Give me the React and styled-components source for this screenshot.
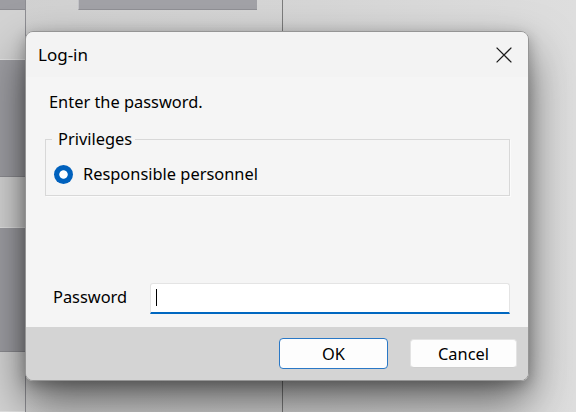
import React from "react";
import styled, { createGlobalStyle } from "styled-components";

const GlobalStyle = createGlobalStyle`
  html, body { margin: 0; padding: 0; }
  body {
    width: 576px;
    height: 412px;
    overflow: hidden;
    background: #d4d4d4;
    font-family: "Noto Sans", "Segoe UI", "Liberation Sans", sans-serif;
    color: #000;
  }
`;

/* ---------- background application (behind the modal) ---------- */

const Desktop = styled.div`
  position: relative;
  width: 576px;
  height: 412px;
  overflow: hidden;
  display: flex;
  background: linear-gradient(90deg, #d1d1d1 0%, #d6d6d6 55%, #dedede 100%);
`;

const Rail = styled.div`
  flex: none;
  width: 25px;
  display: flex;
  flex-direction: column;
  border-right: 1px solid #8e8e93;
`;

const RailBlock = styled.div`
  flex: ${(p) => (p.$fill ? "1" : `0 0 ${p.$h}px`)};
  box-sizing: border-box;
  background: ${(p) => (p.$dark ? "#9d9da2" : "#d3d3d3")};
  border-bottom: 1px solid ${(p) => (p.$dark ? "#8c8c91" : "#e2e2e2")};
`;

const TopArea = styled.div`
  flex: none;
  width: 231px;
  padding-left: 52px;
  box-sizing: border-box;
`;

const Tab = styled.div`
  width: 179px;
  height: 10px;
  box-sizing: border-box;
  background: #a2a2a7;
  border-left: 1px solid #c4c4c8;
  border-bottom: 1px solid #909095;
`;

const Gap = styled.div`
  flex: 0 0 25px;
`;

const Divider = styled.div`
  flex: 0 0 1px;
  background: #7c7c7c;
`;

const Rest = styled.div`
  flex: 1;
`;

/* ---------- modal dialog ---------- */

const Dialog = styled.div`
  position: absolute;
  left: 25px;
  top: 31px;
  width: 504px;
  height: 350px;
  box-sizing: border-box;
  display: flex;
  flex-direction: column;
  border: 1px solid #959595;
  border-radius: 8px;
  overflow: hidden;
  box-shadow: 0 22px 46px rgba(0, 0, 0, 0.55), 0 4px 14px rgba(0, 0, 0, 0.25);
`;

const TitleBar = styled.div`
  flex: 0 0 45px;
  display: flex;
  align-items: center;
  justify-content: space-between;
  padding-left: 12px;
  background: #f3f3f3;
`;

const Title = styled.span`
  font-size: 17px;
  color: #000;
`;

const CloseButton = styled.div`
  width: 49px;
  height: 45px;
  display: flex;
  align-items: center;
  justify-content: center;
`;

const Body = styled.div`
  flex: 1;
  display: flex;
  flex-direction: column;
  padding: 14px 18px 13px 19px;
  background: #f5f5f5;
  font-size: 16.4px;
  line-height: 22px;
`;

const Instruction = styled.div`
  padding-left: 4px;
`;

const GroupBox = styled.fieldset`
  margin: 15px 0 0 0;
  padding: 13px 8px 10px 8px;
  border: 1px solid #d8d8d8;
  box-shadow: 1px 1px 0 #fbfbfb;
  min-width: 0;
`;

const Legend = styled.legend`
  margin-left: -2px;
  padding: 0 3px 0 6px;
  line-height: 22px;
`;

const RadioRow = styled.label`
  display: flex;
  align-items: center;
  gap: 10px;
  height: 22px;
`;

const RadioDot = styled.span`
  flex: none;
  width: 19px;
  height: 19px;
  border-radius: 50%;
  background: radial-gradient(circle, #ffffff 0 3.8px, #0061bd 4.6px);
`;

const PasswordRow = styled.div`
  margin-top: auto;
  display: flex;
  align-items: center;
  padding-left: 8px;
`;

const FieldLabel = styled.span`
  flex: 0 0 97px;
  margin-top: -3px;
`;

const Field = styled.div`
  flex: 1;
  height: 31px;
  box-sizing: border-box;
  display: flex;
  align-items: center;
  padding-left: 5px;
  background: #ffffff;
  border: 1px solid #e4e4e4;
  border-bottom: 2px solid #0067c0;
  border-radius: 3px 3px 0 0;
`;

const Caret = styled.span`
  width: 1px;
  height: 17px;
  margin-top: -2px;
  background: #000;
`;

const Footer = styled.div`
  flex: 0 0 53px;
  display: flex;
  align-items: center;
  justify-content: flex-end;
  gap: 22px;
  padding-right: 11px;
  background: #d4d4d4;
`;

const Button = styled.div`
  box-sizing: border-box;
  width: ${(p) => (p.$default ? "109px" : "107px")};
  height: ${(p) => (p.$default ? "31px" : "29px")};
  display: flex;
  align-items: center;
  justify-content: center;
  background: #fdfdfd;
  border: 1px solid ${(p) => (p.$default ? "#2a78c6" : "#e3e3e3")};
  border-bottom-color: ${(p) => (p.$default ? "#2a78c6" : "#cfcfcf")};
  border-radius: 4px;
  font-size: 16.4px;
  color: #000;
`;

export default function App() {
  return (
    <>
      <GlobalStyle />
      <Desktop>
        <Rail>
          <RailBlock $dark $h={10} />
          <RailBlock $h={50} />
          <RailBlock $dark $h={117} />
          <RailBlock $h={51} />
          <RailBlock $dark $h={124} />
          <RailBlock $fill />
        </Rail>
        <TopArea>
          <Tab />
        </TopArea>
        <Gap />
        <Divider />
        <Rest />

        <Dialog role="dialog" aria-label="Log-in">
          <TitleBar>
            <Title>Log-in</Title>
            <CloseButton aria-label="Close">
              <svg width="16" height="16" viewBox="0 0 16 16">
                <path
                  d="M0.6 0.6 L15.4 15.4 M15.4 0.6 L0.6 15.4"
                  stroke="#1b1b1b"
                  strokeWidth="1.25"
                  fill="none"
                />
              </svg>
            </CloseButton>
          </TitleBar>
          <Body>
            <Instruction>Enter the password.</Instruction>
            <GroupBox>
              <Legend>Privileges</Legend>
              <RadioRow>
                <RadioDot />
                Responsible personnel
              </RadioRow>
            </GroupBox>
            <PasswordRow>
              <FieldLabel>Password</FieldLabel>
              <Field>
                <Caret />
              </Field>
            </PasswordRow>
          </Body>
          <Footer>
            <Button $default>OK</Button>
            <Button>Cancel</Button>
          </Footer>
        </Dialog>
      </Desktop>
    </>
  );
}
